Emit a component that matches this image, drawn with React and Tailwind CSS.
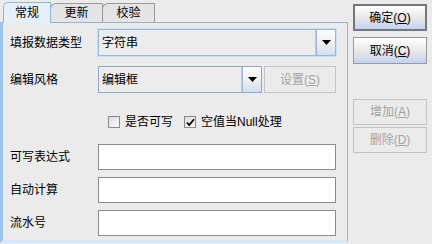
import React from 'react';

const FONT = 'font-["Liberation_Sans","Noto_Sans_CJK_SC",sans-serif]';

function Tab({ label, active }) {
  return (
    <div
      className={
        active
          ? 'h-[21px] w-[48px] flex items-center justify-center rounded-tl-[5px] border border-b-0 border-[#8fb8e0] bg-[#e6f0fa] text-[12px] text-black z-10 -mb-px'
          : 'h-[19px] w-[53px] flex items-center justify-center rounded-tl-[6px] border border-b-0 border-[#9a9a9a] bg-[#e4e4e4] text-[12px] text-black -ml-px'
      }
    >
      {label}
    </div>
  );
}

function Arrow() {
  return (
    <div className="w-[19px] h-full flex items-center justify-center border-l border-[#9cb4d8] bg-gradient-to-b from-[#fdfdfd] via-[#efefef] to-[#d2def4]">
      <svg width="9" height="5" viewBox="0 0 9 5">
        <path d="M0 0h9L4.5 5z" fill="#000" />
      </svg>
    </div>
  );
}

function Combo({ value, width, focused }) {
  return (
    <div
      className={
        'flex h-[27px] border ' +
        (focused ? 'border-[#94b8e4] ring-1 ring-[#c9def4]' : 'border-[#8ea8cc]')
      }
      style={{ width }}
    >
      <div className="flex-1 flex items-center pl-[3px] bg-[#ececec] border-r border-[#b8cce8] text-[12px] text-black">
        {value}
      </div>
      <Arrow />
    </div>
  );
}

function Field() {
  return <div className="w-[238px] h-[26px] border border-[#8c8c8c] bg-white" />;
}

function Row({ label, children, className }) {
  return (
    <div className={'flex items-center ' + (className || '')}>
      <div className="w-[88px] text-[12px] text-black">{label}</div>
      {children}
    </div>
  );
}

function Check({ checked, label }) {
  return (
    <div className="flex items-center gap-[5px] text-[12px] text-black">
      <div className="w-[12px] h-[12px] border border-[#8a8a8a] bg-gradient-to-br from-[#dcdcdc] to-[#fdfdfd] flex items-center justify-center">
        {checked && (
          <svg width="9" height="9" viewBox="0 0 9 9">
            <path d="M1 4.5l2.2 2.5L8 1.2" stroke="#000" strokeWidth="1.8" fill="none" />
          </svg>
        )}
      </div>
      <span>{label}</span>
    </div>
  );
}

function Btn({ text, hot, primary, disabled }) {
  if (disabled) {
    return (
      <div className="w-[74px] h-[26px] flex items-center justify-center border border-[#c2c2c2] bg-[#ebebeb] text-[12px] text-[#a3a3a3]">
        {text}(<span className="underline">{hot}</span>)
      </div>
    );
  }
  return (
    <div
      className={
        'w-[74px] h-[27px] flex items-center justify-center bg-gradient-to-b from-[#ffffff] via-[#e9e9e9] to-[#c3d2f2] text-[12px] text-black ' +
        (primary ? 'border-2 border-[#777777]' : 'border border-[#999999]')
      }
    >
      {text}(<span className="underline">{hot}</span>)
    </div>
  );
}

export default function App() {
  return (
    <div className={'w-[432px] h-[244px] flex bg-[#ebebeb] overflow-hidden ' + FONT}>
      {/* tab pane */}
      <div className="w-[348px] flex flex-col pt-[2px]">
        <div className="flex items-end pl-[3px] h-[20px]">
          <Tab label="常规" active />
          <Tab label="更新" />
          <Tab label="校验" />
        </div>
        <div className="h-[221px] border border-[#8fb3dc] border-l-[3px] border-l-[#9dc4ea] border-b-[3px] border-b-[#d4e6f7] bg-[#ebebeb] pl-[7px] pt-[6px]">
          <Row label="填报数据类型">
            <Combo value="字符串" width={238} focused />
          </Row>
          <Row label="编辑风格" className="mt-[10px]">
            <Combo value="编辑框" width={164} />
            <div className="ml-[2px] w-[72px] h-[27px] flex items-center justify-center border border-[#c4c4c4] text-[12px] text-[#a3a3a3]">
              设置(<span className="underline">S</span>)
            </div>
          </Row>
          <div className="flex items-center gap-[11px] pl-[98px] mt-[17px] h-[24px]">
            <Check label="是否可写" />
            <Check label="空值当Null处理" checked />
          </div>
          <div className="flex flex-col gap-[7px] mt-[10px]">
            <Row label="可写表达式"><Field /></Row>
            <Row label="自动计算"><Field /></Row>
            <Row label="流水号"><Field /></Row>
          </div>
        </div>
      </div>
      {/* buttons */}
      <div className="flex flex-col pl-[5px] pt-[4px]">
        <Btn text="确定" hot="O" primary />
        <div className="mt-[6px]"><Btn text="取消" hot="C" /></div>
        <div className="mt-[35px]"><Btn text="增加" hot="A" disabled /></div>
        <div className="mt-[2px]"><Btn text="删除" hot="D" disabled /></div>
      </div>
    </div>
  );
}
